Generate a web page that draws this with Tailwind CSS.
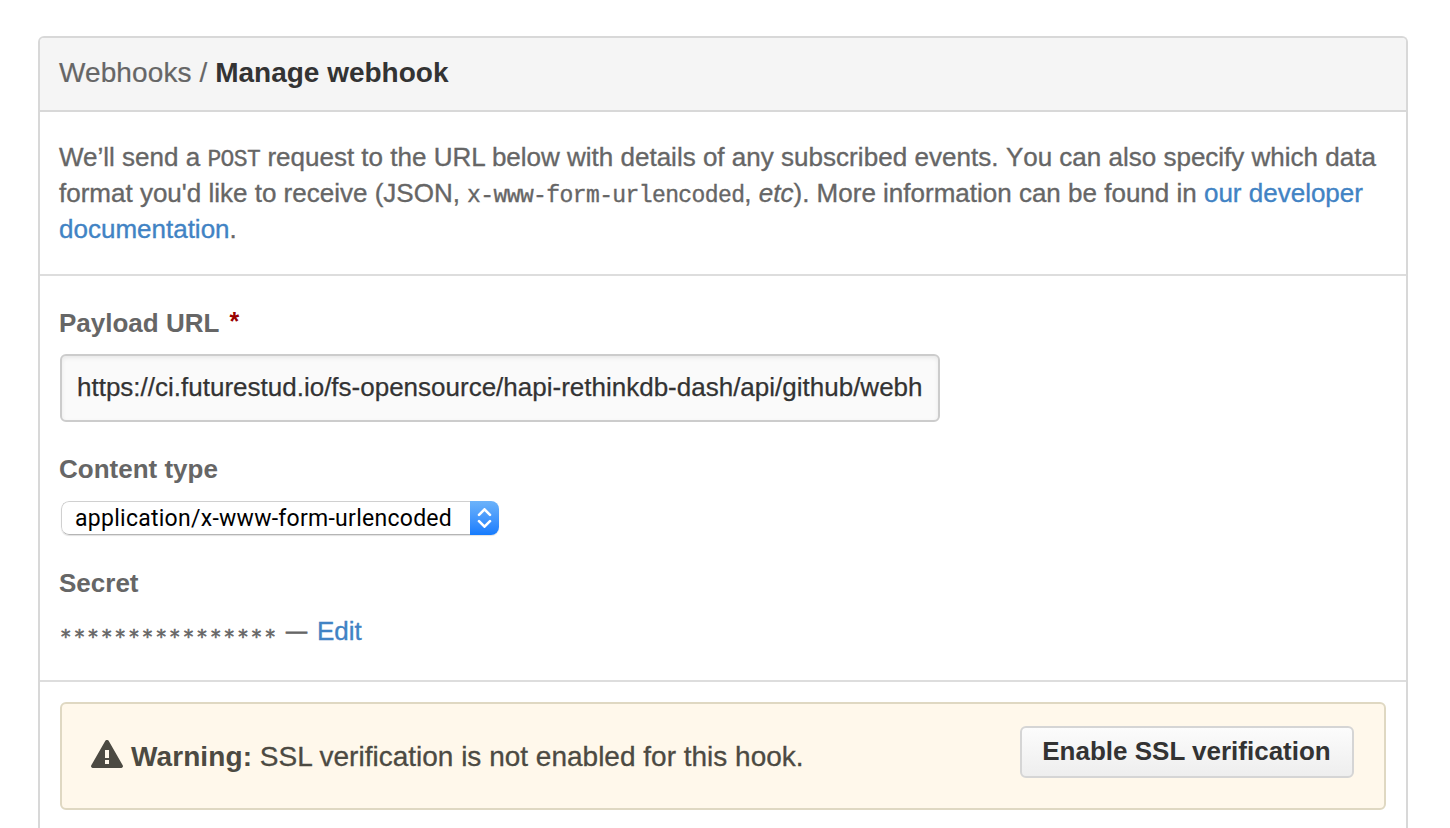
<!DOCTYPE html>
<html lang="en">
<head>
<meta charset="utf-8">
<title>Manage webhook</title>
<script src="https://cdn.jsdelivr.net/npm/@tailwindcss/browser@4"></script>
</head>
<body class="h-[828px] overflow-hidden bg-white pt-9 pr-[42px] pl-[38px] font-['Liberation_Sans',Arial,sans-serif] text-[26px] leading-9 text-[#666666]">
<main class="h-[792px] rounded-t-[6px] border-2 border-b-0 border-[#d8d8d8] bg-white">
  <header class="h-[74px] rounded-t-[4px] border-b-2 border-[#d8d8d8] bg-[#f5f5f5] px-[19px] pt-[17px] text-[28px] whitespace-nowrap"><span class="tracking-[0.1px] [-webkit-text-stroke:0.2px]">Webhooks /</span> <strong class="text-[#333333]">Manage webhook</strong></header>

  <section class="h-[164px] border-b-2 border-[#dddddd] px-[19px] pt-[27px] whitespace-nowrap [-webkit-text-stroke:0.35px]">
    <p>We’ll send a <code class="font-['Liberation_Mono',monospace] text-[23px] leading-none tracking-[-0.6px]">POST</code> request to the URL below with details of any <span class="tracking-[0.05px]">subscribed events.</span> <span class="[font-kerning:none]">You</span> can also specify which data</p>
    <p>format you'd like to receive (JSON, <code class="font-['Liberation_Mono',monospace] text-[23px] leading-none tracking-[-0.6px]">x-www-form-urlencoded</code>, <em>etc</em>). More information can be found in <a class="text-[#4183c4]">our developer</a></p>
    <p><a class="text-[#4183c4]">documentation</a>.</p>
  </section>

  <section class="flex h-[406px] flex-col items-start border-b-2 border-[#dddddd] px-5 pt-[29px] whitespace-nowrap">
    <label class="-ml-px flex font-bold">Payload URL <span class="-mt-0.5 ml-[10px] text-[25px] text-[#990000]">*</span></label>
    <div class="mt-[13px] flex h-[68px] w-[880px] items-center overflow-hidden rounded-[6px] border-2 border-[#cccccc] bg-[#fafafa] pb-0.5 pl-[15px] text-[#333333] shadow-[inset_0_2px_4px_rgba(0,0,0,0.075)] [-webkit-text-stroke:0.25px]">https://ci.futurestud.io/fs-opensource/hapi-rethinkdb-dash/api/github/webh</div>
    <label class="-ml-px mt-[29px] font-bold">Content type</label>
    <div class="mt-[14px] ml-px flex h-[34px] w-[438px] overflow-hidden rounded-[8px] shadow-[0_1px_1px_rgba(0,0,0,0.12)]">
      <div class="flex flex-1 items-center rounded-l-[8px] border border-r-0 border-[#d0d0d0] border-b-[#b5b5b5] pt-0.5 pl-[13px] font-[Roboto,sans-serif] text-[23px] tracking-[0.27px] text-black">application/x-www-form-urlencoded</div>
      <div class="flex w-[29px] items-center justify-center bg-linear-to-b from-[#6cb3fa] to-[#147bfd]">
        <svg class="h-5 w-4" viewBox="0 0 16 20" fill="none" stroke="white" stroke-width="2.6" stroke-linecap="round" stroke-linejoin="round"><path d="M2 6.8 7.5 1.3 13 6.8M2 13.2l5.5 5.5 5.5-5.5"/></svg>
      </div>
    </div>
    <label class="-ml-px mt-[30px] font-bold">Secret</label>
    <div class="mt-3 flex [-webkit-text-stroke:0.35px]"><span class="mt-[7px] w-[218px] font-['DejaVu_Sans_Mono',monospace] text-[19px] leading-8 tracking-[2.19px] [-webkit-text-stroke:0.6px]">****************</span><span class="ml-2 text-[21px] [-webkit-text-stroke:0.8px]">—</span><a class="ml-[10px] text-[#4183c4]">Edit</a></div>
  </section>

  <section class="mx-5 mt-5 flex h-[108px] items-start rounded-[6px] border-2 border-[#dfd8c2] bg-[#fff8eb] pr-[30px] pl-[29px] text-[28px] whitespace-nowrap text-[#4c4a42]">
    <svg class="mt-9 mr-2 h-7 w-8" viewBox="0 0 32 28"><path fill="currentColor" fill-rule="evenodd" d="M14.2 1.1a2 2 0 0 1 3.6 0l13.9 24.2a1.8 1.8 0 0 1-1.6 2.7H1.9A1.8 1.8 0 0 1 .3 25.3ZM14 10v8h4v-8Zm0 10v4h4v-4Z"/></svg>
    <p class="mt-[35px]"><strong class="tracking-[0.1px]">Warning:</strong> <span class="[-webkit-text-stroke:0.3px]">SSL verification is not enabled for this hook.</span></p>
    <button class="mt-[22px] ml-auto h-[52px] w-[334px] rounded-[6px] border-2 border-[#d5d5d5] bg-linear-to-b from-[#fcfcfc] to-[#eeeeee] pr-px pb-[2px] text-[26px] font-bold text-[#333333]">Enable SSL verification</button>
  </section>
</main>
</body>
</html>
